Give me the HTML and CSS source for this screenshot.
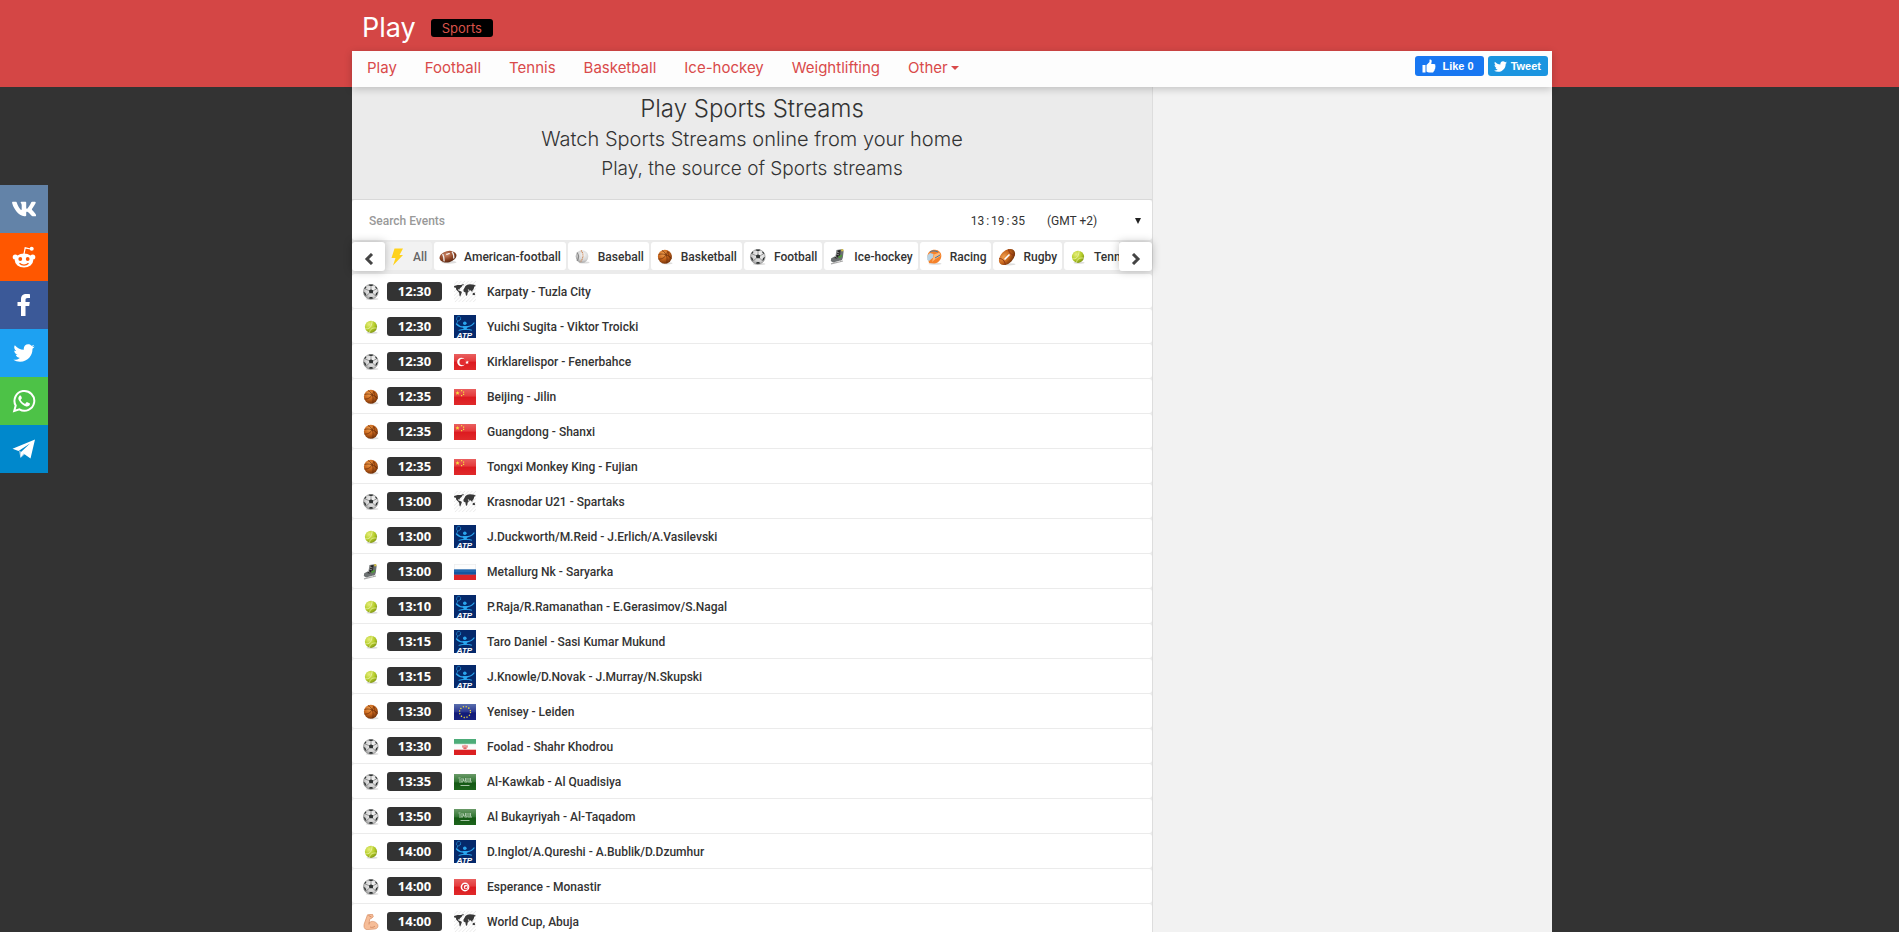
FILE: index.html
```html
<!DOCTYPE html>
<html lang="en">
<head>
<meta charset="utf-8">
<title>Play Sports Streams</title>
<link rel="stylesheet" href="styles.css">
</head>
<body>
<svg class="sprite" aria-hidden="true">
  <defs>
    <radialGradient id="g-orange" cx=".38" cy=".3" r=".75"><stop offset="0" stop-color="#f0a050"/><stop offset=".5" stop-color="#c8661c"/><stop offset="1" stop-color="#6e2f08"/></radialGradient>
    <radialGradient id="g-brown" cx=".45" cy=".3" r=".75"><stop offset="0" stop-color="#d08a6a"/><stop offset=".6" stop-color="#8a4020"/><stop offset="1" stop-color="#4e2412"/></radialGradient>
    <radialGradient id="g-lime" cx=".35" cy=".3" r=".75"><stop offset="0" stop-color="#e6ee7a"/><stop offset=".6" stop-color="#b4cc28"/><stop offset="1" stop-color="#7e9414"/></radialGradient>
    <radialGradient id="g-grey" cx=".6" cy=".35" r=".75"><stop offset="0" stop-color="#f6f6f6"/><stop offset=".6" stop-color="#d4d4d4"/><stop offset="1" stop-color="#8c8c8c"/></radialGradient>
    <linearGradient id="g-red" x2="0" y2="1"><stop offset="0" stop-color="#e9605f"/><stop offset=".45" stop-color="#e53a3c"/><stop offset=".5" stop-color="#dc1a20"/><stop offset="1" stop-color="#e02a2a"/></linearGradient>
    <linearGradient id="g-green" x2="0" y2="1"><stop offset="0" stop-color="#6a9a68"/><stop offset=".5" stop-color="#2f7430"/><stop offset=".55" stop-color="#145814"/><stop offset="1" stop-color="#1d651c"/></linearGradient>
    <linearGradient id="g-eu" x2="0" y2="1"><stop offset="0" stop-color="#5a6fae"/><stop offset=".5" stop-color="#2a3690"/><stop offset=".55" stop-color="#111a78"/><stop offset="1" stop-color="#18227e"/></linearGradient>
    <pattern id="hatch" width="4" height="4" patternUnits="userSpaceOnUse"><path d="M-1 5 5-1M-1 1 1-1M3 5 5 3" stroke="#ddd" stroke-width=".7"/></pattern>
  </defs>
  <symbol id="football" viewBox=".5 .5 15 15"><ellipse cx="9" cy="14.600" rx="6" ry="1" fill="#ddd"/><circle cx="7.800" cy="7.800" r="6.900" fill="url(#g-grey)" stroke="#777" stroke-width=".5"/><path d="M6 6.600 8 5.500l2.200 1.100-.5 2.500H6.500zM5.500 1.700 8 2.700 10.500 1.700 9.500 1h-3zM1 7.800l1.800 1.200L3.700 11.500l-1.500-.5zM14.600 7.800l-1.800 1.200-.9 2.500 1.500-.5zM6.300 14.300l.4-1.500h2.600l.4 1.500zM1.600 4.500l1.600-1.800.4 1.200-1.300 1.300zM14 4.500l-1.600-1.800-.4 1.200 1.300 1.300z" fill="#2f3333"/><path d="M8 5.500V2.700M10.200 6.600l3-1.400M6 6.600 2.500 5.200M9.700 9.100l2.200 2.400M6.500 9.100 3.700 11.500" stroke="#666" stroke-width=".6"/></symbol>
  <symbol id="tennis" viewBox="0 0 16 16"><ellipse cx="9" cy="13.800" rx="5.500" ry="1" fill="#ddd"/><circle cx="8" cy="7.800" r="6.100" fill="url(#g-lime)"/><path d="M2.400 9.500C6 10.600 8.500 8.500 9.200 2M6.500 13.600c.5-3.500 3-5.300 7.400-4.400" stroke="#eff5b4" stroke-width=".7" fill="none"/></symbol>
  <symbol id="basketball" viewBox="0 0 16 16"><ellipse cx="10" cy="14.300" rx="5.500" ry="1.100" fill="#ddd"/><circle cx="7.900" cy="7.700" r="7" fill="url(#g-orange)"/><path d="M1.500 5.500C6 4 11 6 14.500 9.500M5 1.500c4.500 2.500 6 7 4.500 12.800M1.300 10c4 .5 8-2 9.500-8M11.500 3c-1 3 .5 5 3 6" stroke="#6a2c08" stroke-width=".7" fill="none"/></symbol>
  <symbol id="hockey" viewBox="0 0 16 16"><path d="M6.500 1 13 0l.6 2.500-.8 6.300L12 11 3 13.500.8 12l.4-2.800L5.500 7z" fill="#6d7172"/><path d="M8 1.500 10.500 1 10 7 7 9.500 4 9l2-1.200z" fill="#222"/><path d="M11 .4 13 .1l.5 2-2 .5z" fill="#d8c244"/><path d="m6.500 3 3 1M6.300 5l3 1M5 7.300l2.500 1.300" stroke="#ccc" stroke-width=".6"/><path d="m8 7.600 4-2v2L9 9.500z" fill="#4f9a3a"/><path d="M1 14.800 13 12M4 13v1.500M10.500 11v2" stroke="#aaa" stroke-width="1.200" fill="none"/></symbol>
  <symbol id="arm" viewBox="0 0 16 16"><path d="M4.500.8 9.500.3l.8 2.500-2 1.700-1.500.3-.6 4C8.500 6.500 12.500 7 14.700 10.500c.8 2.500-.3 4.300-3 4.500L4 15.600C1 15.200.7 12.500 1.200 10z" fill="#f6bd98" stroke="#d98f66" stroke-width=".7"/><path d="M5.500 1.500 8.500 3M6.200 8.500 6 10.500M7 13c2 .8 4 .3 5-1" stroke="#c97c55" stroke-width=".7" fill="none"/></symbol>
  <symbol id="bolt" viewBox="0 0 18 18"><path d="M6.500.5H15L11.500 7H15L5 17.500 7.500 10H3.500z" fill="#ffd21c"/></symbol>
  <symbol id="amfoot" viewBox="0 0 18 16"><ellipse cx="10" cy="13.300" rx="7.500" ry="1.500" fill="#ddd"/><ellipse cx="9" cy="7.700" rx="8.600" ry="5.600" transform="rotate(-14 9 7.700)" fill="url(#g-brown)"/><path d="M3.600 5c1.200 2.200 1.600 4.400 1.400 7.400M13 2.700c1.500 2.200 2 4.200 1.700 6.800" stroke="#eee" stroke-width="1.300" fill="none"/><path d="m7 5.500 4-1.200M8 4.500l.4 1.500M9.500 4l.4 1.500" stroke="#fff" stroke-width=".7"/></symbol>
  <symbol id="baseball" viewBox="-1 -1 18 18"><ellipse cx="10" cy="13.500" rx="5.500" ry="1" fill="#ddd"/><circle cx="8" cy="7.500" r="6.300" fill="url(#g-grey)"/><path d="M7 1.500c3 3 2.500 8-.8 11.700" stroke="#cf8a5a" stroke-width="1.100" stroke-dasharray="1.200 .6" fill="none"/><path d="M3 3.500c2 2.500 2 5.500 0 8.500" stroke="#888" stroke-width="1.200" fill="none"/></symbol>
  <symbol id="racing" viewBox="0 0 16 16"><ellipse cx="9" cy="14.800" rx="6.500" ry="1" fill="#ddd"/><path d="M1.500 8C1.300 3 5 .5 9 .7c4 .3 6.500 3 6.300 6.500-.3 4-3 6.500-7 7.300L3 14z" fill="#f5822a"/><path d="M1.200 6.500 4 4l3.500 1-.3 3.500L3 12 1.200 11z" fill="#b9d3e4"/><path d="m8 5.500 5.500-2 1 3.500-5 3L6 13" fill="#ffb877"/><path d="M4 3C6 1.500 9 1.500 12 3M9 9l5-3" stroke="#3d78a8" stroke-width="1" fill="none"/></symbol>
  <symbol id="rugby" viewBox="0 0 18 18"><ellipse cx="11" cy="16.300" rx="6.500" ry="1.100" fill="#ddd"/><ellipse cx="9" cy="9" rx="9.600" ry="6.200" transform="rotate(-45 9 9)" fill="url(#g-orange)"/><path d="M1.300 10.500c3 0 5.500 2.500 6 6M10.500 1.500c.5 3 3 5.500 6 6" stroke="#8a3418" stroke-width="1" fill="none"/><path d="m6.500 11.500 5-5" stroke="#fff" stroke-width="1.600"/></symbol>

  <symbol id="world" viewBox="0 0 24 23"><path d="M0 0h24v23H0z" fill="url(#hatch)"/><path d="m0 5.500 4-1 5-.3-.5 2L6.500 8 5.800 9.500 4.500 8.800l.3 1.500 2 .7 1.800 1-.8 2.500-1 2.500-.7-.5-.4-3.500L4.500 11.500 2.500 9.500 2 7.500.3 7zM8 3.800l3-.3L9.800 5.300zM11.500 7.500l1-2 2-1.300 3-.7L22 4l2 1.500-1.800.5-.5 2-1 2-1 .7.5 1.500-1.200-.9-.9-1.500-.8 1.500-.9-1.800-1.500-.4 1.300 2-1.400 1.800-.3 2.500-1 1-.8-2-.3-2-1.800-.5-.4-2zM20.500 13.500l1.700-.8 1 2-1 1-2-.6z" fill="#383838"/></symbol>
  <symbol id="atp" viewBox="0 0 22 23"><path d="M0 0h22v23H0z" fill="#05296b"/><g fill="none" stroke="#2aa5ee" stroke-linecap="round"><ellipse cx="4.600" cy="3.600" rx="2" ry="2.500" transform="rotate(20 4.600 3.600)" stroke-width=".5"/><path d="M3.700 6 2.800 8.500" stroke-width=".6"/><path d="M2.500 9c2.500 2.700 5.500 3.300 8.500 3 4-.2 7-1 9-4" stroke-width="1.300"/><path d="M11.500 12.500v2M5 15.300c4-1.300 9-1.300 12.500-.2" stroke-width="1"/></g><circle cx="10.800" cy="8.300" r="1.800" fill="#2aa5ee"/><path d="m8.500 11 5.500.3-2 3.700H10z" fill="#2aa5ee"/><text x="10.500" y="22.500" text-anchor="middle" class="atp-label">ATP</text></symbol>
  <symbol id="tr" viewBox="0 0 22 16"><path d="M0 0h22v16H0z" fill="url(#g-red)"/><circle cx="7.400" cy="8" r="4.200" fill="#fff"/><circle cx="8.700" cy="8" r="3.300" fill="#e22c30"/><path d="m11.200 8 1.300-.3.500-1.300.6 1.200 1.400.1-1 .9.300 1.300-1.200-.7-1.200.7.300-1.300z" fill="#fff"/></symbol>
  <symbol id="cn" viewBox="0 0 22 16"><path d="M0 0h22v16H0z" fill="url(#g-red)"/><path d="m3.500 2 .6 1.300 1.400.1-1 1 .3 1.400-1.300-.7-1.300.7.300-1.400-1-1 1.400-.1zM7 1h1.200v1.200H7zM9 2.500h1.200v1.200H9zM9 4.700h1.200v1.200H9zM7 6h1.200v1.200H7z" fill="#f8d83c"/></symbol>
  <symbol id="ru" viewBox="0 0 22 16"><path d="M0 0h22v5.300H0z" fill="#fdfdfd"/><path d="M0 5.300h22v5.400H0z" fill="#2266ad"/><path d="M0 8h22v2.700H0z" fill="#1557a0"/><path d="M0 10.700h22V16H0z" fill="#dc2428"/><path d="M.25 5V.25h21.500V5" fill="none" stroke="#ddd" stroke-width=".5"/></symbol>
  <symbol id="eu" viewBox="0 0 22 16"><path d="M0 0h22v16H0z" fill="url(#g-eu)"/><circle cx="11" cy="8" r="5.500" fill="none" stroke="#f2dc3a" stroke-width="1.300" stroke-dasharray="1.200 1.680"/></symbol>
  <symbol id="ir" viewBox="0 0 22 16"><path d="M0 0h22v5.300H0z" fill="#4dac79"/><path d="M0 5.300h22v5.400H0z" fill="#fcfcfc"/><path d="M0 10.700h22V16H0z" fill="#dc2022"/><path d="M.5 4.600h21" stroke="#a5d6ba" stroke-dasharray="1 1" stroke-width=".8"/><path d="M9 6.200c-.8 2 0 3.400 2 3.600 2-.2 2.800-1.600 2-3.600M11 5.800v4M10 6.500c-.6 1.200 0 2.400 1 3 1-.6 1.600-1.800 1-3" stroke="#e04a4a" stroke-width=".8" fill="none"/></symbol>
  <symbol id="sa" viewBox="0 0 22 16"><path d="M0 0h22v16H0z" fill="url(#g-green)"/><path d="M4.500 4h2M5 6h2M5 8h4M8 4v4M9.500 4.500v2.500h2V4M10.500 8h3M13 4v4M15 4v3.500M16.500 4v3.500M14 8h4" stroke="#c5d8c4" stroke-width=".8" fill="none"/><path d="M6.500 11.500h9" stroke="#c8dcc8" stroke-width=".8"/></symbol>
  <symbol id="tn" viewBox="0 0 22 16"><path d="M0 0h22v16H0z" fill="url(#g-red)"/><circle cx="11" cy="8" r="4.400" fill="#fff"/><circle cx="11.200" cy="8" r="3" fill="#dc2026"/><circle cx="12" cy="8" r="2.300" fill="#fff"/><path d="m10.500 8 1.200-.3.400-1.200.5 1.100 1.300.1-.9.800.2 1.200-1.100-.7-1 .7.200-1.200z" fill="#dc2026"/></symbol>

  <symbol id="bird" viewBox="0 40 512 432"><path d="M459.370 151.716c.325 4.548.325 9.097.325 13.645 0 138.720-105.583 298.558-298.558 298.558-59.452 0-114.680-17.219-161.137-47.106 8.447.974 16.568 1.299 25.340 1.299 49.055 0 94.213-16.568 130.274-44.832-46.132-.975-84.792-31.188-98.112-72.772 6.498.974 12.995 1.624 19.818 1.624 9.421 0 18.843-1.300 27.614-3.573-48.081-9.747-84.143-51.980-84.143-102.985v-1.299c13.969 7.797 30.214 12.670 47.431 13.319-28.264-18.843-46.781-51.005-46.781-87.391 0-19.492 5.197-37.360 14.294-52.954 51.655 63.675 129.300 105.258 216.365 109.807-1.624-7.797-2.599-15.918-2.599-24.040 0-57.828 46.782-104.934 104.934-104.934 30.213 0 57.502 12.670 76.670 33.137 23.715-4.548 46.456-13.320 66.599-25.340-7.798 24.366-24.366 44.833-46.132 57.827 21.117-2.273 41.584-8.122 60.426-16.243-14.292 20.791-32.161 39.308-52.628 54.253z" fill="#fff"/></symbol>
</svg>

<nav class="share" aria-label="Share">
  <a class="share-link vk" href="#" aria-label="VK"><svg width="24" height="16" viewBox="16 90 536 332"><path fill="#fff" d="M545 117.700c3.700-12.500 0-21.700-17.800-21.700h-58.900c-15 0-21.900 7.900-25.600 16.700 0 0-30 73.100-72.400 120.500-13.700 13.700-20 18.100-27.500 18.100-3.700 0-9.400-4.400-9.400-16.900V117.700c0-15-4.200-21.700-16.600-21.700h-92.600c-9.400 0-15 7-15 13.500 0 14.200 21.200 17.500 23.400 57.500v86.800c0 19-3.400 22.500-10.900 22.500-20 0-68.600-73.400-97.400-157.400-5.800-16.300-11.500-22.900-26.600-22.900H38.800c-16.800 0-20.200 7.900-20.200 16.700 0 15.600 20 93.100 93.100 195.500C160.400 378.100 229 416 291.400 416c37.500 0 42.100-8.400 42.100-22.900 0-66.800-3.400-73.100 15.400-73.100 8.700 0 23.700 4.400 58.700 38.100 40 40 46.600 57.900 69 57.900h58.900c16.800 0 25.300-8.400 20.400-25-11.200-34.900-86.900-106.700-90.300-111.500-8.700-11.200-6.200-16.200 0-26.200.1-.1 72-101.300 79.400-135.600z"/></svg></a>
  <a class="share-link reddit" href="#" aria-label="Reddit"><svg width="24" height="24" viewBox="0 0 24 24"><g fill="#fff"><ellipse cx="12" cy="15.500" rx="9.200" ry="7"/><circle cx="3.300" cy="12" r="2.600"/><circle cx="20.700" cy="12" r="2.600"/><circle cx="19.700" cy="3.700" r="2"/></g><path d="M12 9 13.200 2.800 18.500 4" fill="none" stroke="#fff" stroke-width="1.200"/><circle cx="8.300" cy="14" r="1.900" fill="#ff5700"/><circle cx="15.700" cy="14" r="1.900" fill="#ff5700"/><path d="M7.500 18.300c2.500 2.300 6.500 2.300 9 0" fill="none" stroke="#ff5700" stroke-width="1.300"/></svg></a>
  <a class="share-link facebook" href="#" aria-label="Facebook"><svg width="14" height="22" viewBox="0 0 14 22"><path fill="#fff" d="M4 22V12H.500V8H4V5.200C4 1.700 6 0 9.300 0c1.700 0 2.900.1 3.700.2v3.700h-2.300C8.900 3.900 8.500 4.700 8.500 6v2h4.300l-.6 4H8.500v10z"/></svg></a>
  <a class="share-link twitter" href="#" aria-label="Twitter"><svg width="22" height="18"><use href="#bird"/></svg></a>
  <a class="share-link whatsapp" href="#" aria-label="WhatsApp"><svg width="24" height="24" viewBox="0 0 24 24"><path d="M2.200 22 3.700 16.600A9.900 9.900 0 1 1 7.400 20.400z" fill="none" stroke="#fff" stroke-width="2"/><path fill="#fff" d="M8.500 6.500c-.4-.1-.9 0-1.200.4-1.400 1.500-1.200 3.300 0 5.200 1.900 3 4.300 4.700 7 5.300 1.700.3 3.300-.6 3.600-2.100.1-.6 0-.9-.3-1l-2.300-1.100c-.4-.2-.7 0-.9.200l-.9 1.200c-.2.200-.5.200-.8.100-1.800-.8-3-1.900-3.900-3.500-.1-.3-.1-.5.100-.7l.8-1c.1-.2.2-.4.100-.7L9.100 7c-.1-.3-.3-.5-.6-.5z"/></svg></a>
  <a class="share-link telegram" href="#" aria-label="Telegram"><svg width="24" height="20" viewBox="0 0 24 20"><path d="M7 11.500 8.500 19l4.500-4z" fill="#a9d0ea"/><path d="M.500 9.700 23 .500 18.500 19.500 11.500 14.500 8.500 18.500 9 13 18 4.500 6.500 12z" fill="#fff"/></svg></a>
</nav>

<header class="top">
  <div class="wrap">
    <div class="brand-row"><a class="brand" href="#">Play</a><a class="tag" href="#">Sports</a></div>
    <nav class="menu">
      <a href="#">Play</a><a href="#">Football</a><a href="#">Tennis</a><a href="#">Basketball</a><a href="#">Ice-hockey</a><a href="#">Weightlifting</a><a class="more" href="#">Other</a>
      <div class="social">
        <button class="like" type="button"><svg width="14" height="14" viewBox="0 0 14 14"><path d="M.500 6h3v7.500h-3zM4.500 6 7.500 3V.800C8.500 0 9.800.8 9.700 2.200L9.200 5H12c1.200 0 1.700.9 1.200 1.900.5.600.4 1.300-.1 1.800.3.700.1 1.300-.5 1.700.2.700-.1 1.300-.8 1.600.1.900-.4 1.500-1.400 1.500H7c-1 0-1.700-.3-2.500-1z" fill="#fff"/></svg>Like 0</button>
        <button class="tweet" type="button"><svg width="13" height="11"><use href="#bird"/></svg>Tweet</button>
      </div>
    </nav>
  </div>
</header>

<div class="wrap page">
  <main class="main">
    <section class="hero">
      <h1>Play Sports Streams</h1>
      <h2>Watch Sports Streams online from your home</h2>
      <h3>Play, the source of Sports streams</h3>
    </section>
    <div class="filter">
      <input class="search" type="text" placeholder="Search Events" aria-label="Search Events">
      <div class="clock"><span>13</span><span>:</span><span>19</span><span>:</span><span>35</span></div>
      <div class="zone"><select aria-label="Time zone"><option>(GMT +2)</option></select></div>
    </div>
    <div class="sports">
      <button class="arrow" type="button" aria-label="Previous"><svg width="10" height="12" viewBox="0 0 10 12"><path d="M8 1 3 6l5 5" fill="none" stroke="#444" stroke-width="3"/></svg></button>
      <div class="tabs">
        <button class="tab active" type="button"><svg><use href="#bolt"/></svg>All</button>
        <button class="tab" type="button"><svg><use href="#amfoot"/></svg>American-football</button>
        <button class="tab" type="button"><svg><use href="#baseball"/></svg>Baseball</button>
        <button class="tab" type="button"><svg class="ball"><use href="#basketball"/></svg>Basketball</button>
        <button class="tab" type="button"><svg class="ball"><use href="#football"/></svg>Football</button>
        <button class="tab" type="button"><svg class="ball"><use href="#hockey"/></svg>Ice-hockey</button>
        <button class="tab" type="button"><svg class="ball"><use href="#racing"/></svg>Racing</button>
        <button class="tab" type="button"><svg><use href="#rugby"/></svg>Rugby</button>
        <button class="tab" type="button"><svg class="ball"><use href="#tennis"/></svg>Tennis</button>
      </div>
      <button class="arrow" type="button" aria-label="Next"><svg width="10" height="12" viewBox="0 0 10 12"><path d="m2 1 5 5-5 5" fill="none" stroke="#444" stroke-width="3"/></svg></button>
    </div>
    <div class="events">
      <a class="event" href="#"><svg class="sport"><use href="#football"/></svg><time>12:30</time><svg class="flag square"><use href="#world"/></svg><span>Karpaty - Tuzla City</span></a>
      <a class="event" href="#"><svg class="sport"><use href="#tennis"/></svg><time>12:30</time><svg class="flag square"><use href="#atp"/></svg><span>Yuichi Sugita - Viktor Troicki</span></a>
      <a class="event" href="#"><svg class="sport"><use href="#football"/></svg><time>12:30</time><svg class="flag"><use href="#tr"/></svg><span>Kirklarelispor - Fenerbahce</span></a>
      <a class="event" href="#"><svg class="sport"><use href="#basketball"/></svg><time>12:35</time><svg class="flag"><use href="#cn"/></svg><span>Beijing - Jilin</span></a>
      <a class="event" href="#"><svg class="sport"><use href="#basketball"/></svg><time>12:35</time><svg class="flag"><use href="#cn"/></svg><span>Guangdong - Shanxi</span></a>
      <a class="event" href="#"><svg class="sport"><use href="#basketball"/></svg><time>12:35</time><svg class="flag"><use href="#cn"/></svg><span>Tongxi Monkey King - Fujian</span></a>
      <a class="event" href="#"><svg class="sport"><use href="#football"/></svg><time>13:00</time><svg class="flag square"><use href="#world"/></svg><span>Krasnodar U21 - Spartaks</span></a>
      <a class="event" href="#"><svg class="sport"><use href="#tennis"/></svg><time>13:00</time><svg class="flag square"><use href="#atp"/></svg><span>J.Duckworth/M.Reid - J.Erlich/A.Vasilevski</span></a>
      <a class="event" href="#"><svg class="sport"><use href="#hockey"/></svg><time>13:00</time><svg class="flag"><use href="#ru"/></svg><span>Metallurg Nk - Saryarka</span></a>
      <a class="event" href="#"><svg class="sport"><use href="#tennis"/></svg><time>13:10</time><svg class="flag square"><use href="#atp"/></svg><span>P.Raja/R.Ramanathan - E.Gerasimov/S.Nagal</span></a>
      <a class="event" href="#"><svg class="sport"><use href="#tennis"/></svg><time>13:15</time><svg class="flag square"><use href="#atp"/></svg><span>Taro Daniel - Sasi Kumar Mukund</span></a>
      <a class="event" href="#"><svg class="sport"><use href="#tennis"/></svg><time>13:15</time><svg class="flag square"><use href="#atp"/></svg><span>J.Knowle/D.Novak - J.Murray/N.Skupski</span></a>
      <a class="event" href="#"><svg class="sport"><use href="#basketball"/></svg><time>13:30</time><svg class="flag"><use href="#eu"/></svg><span>Yenisey - Leiden</span></a>
      <a class="event" href="#"><svg class="sport"><use href="#football"/></svg><time>13:30</time><svg class="flag"><use href="#ir"/></svg><span>Foolad - Shahr Khodrou</span></a>
      <a class="event" href="#"><svg class="sport"><use href="#football"/></svg><time>13:35</time><svg class="flag"><use href="#sa"/></svg><span>Al-Kawkab - Al Quadisiya</span></a>
      <a class="event" href="#"><svg class="sport"><use href="#football"/></svg><time>13:50</time><svg class="flag"><use href="#sa"/></svg><span>Al Bukayriyah - Al-Taqadom</span></a>
      <a class="event" href="#"><svg class="sport"><use href="#tennis"/></svg><time>14:00</time><svg class="flag square"><use href="#atp"/></svg><span>D.Inglot/A.Qureshi - A.Bublik/D.Dzumhur</span></a>
      <a class="event" href="#"><svg class="sport"><use href="#football"/></svg><time>14:00</time><svg class="flag"><use href="#tn"/></svg><span>Esperance - Monastir</span></a>
      <a class="event" href="#"><svg class="sport"><use href="#arm"/></svg><time>14:00</time><svg class="flag square"><use href="#world"/></svg><span>World Cup, Abuja</span></a>
    </div>
  </main>
  <aside class="side"></aside>
</div>
</body>
</html>
```
FILE: styles.css
```css
* { box-sizing: border-box; }

body {
  margin: 0;
  padding-left: 5px;
  background: #333;
  color: #333;
  font-family: Roboto, "Open Sans", sans-serif;
  font-size: 12px;
}

a { color: inherit; text-decoration: none; }
button, input, select { font: inherit; color: inherit; border: 0; margin: 0; }
.sprite { position: absolute; width: 0; height: 0; }

.wrap { max-width: 1200px; margin: 0 auto; }

/* Header */
.top {
  position: relative;
  z-index: 2;
  margin-left: -5px;
  padding-left: 5px;
  background: #d44645;
  font-family: Inter, "Open Sans", sans-serif;
}
.brand-row { display: flex; align-items: center; gap: 15px; height: 51px; padding: 4px 10px 0; }
.brand { color: #fff; font-size: 27px; line-height: 30px; }
.tag {
  padding: 0 11px;
  border-radius: 3px;
  background: #000;
  color: #d9534a;
  font-size: 13px;
  line-height: 18px;
}
.menu {
  display: flex;
  align-items: center;
  gap: 28px;
  height: 36px;
  padding: 0 4px 4px 15px;
  background: #fdfdfd;
  color: #d94a4a;
  font-size: 15px;
  box-shadow: 0 2px 8px rgba(0, 0, 0, .2);
}
.more::after {
  content: "";
  display: inline-block;
  margin-left: 3px;
  vertical-align: 3px;
  border: 4px solid transparent;
  border-top-color: currentColor;
  border-bottom: 0;
}
.social { display: flex; gap: 4px; margin-left: auto; padding-bottom: 2px; }
.social button {
  display: flex;
  align-items: center;
  height: 20px;
  border-radius: 3px;
  color: #fff;
  font: bold 11px "Liberation Sans", sans-serif;
}
.like { gap: 6px; padding: 0 10px 0 7px; background: #1877f2; }
.tweet { gap: 4px; padding: 0 7px 0 6px; background: #1b95e0; }

/* Share bar */
.share { position: fixed; top: 185px; left: 0; z-index: 3; }
.share-link { display: flex; align-items: center; justify-content: center; width: 48px; height: 48px; }
.vk { background: #6383a8; }
.reddit { background: #ff5700; }
.facebook { background: #3b5998; }
.twitter { background: #1da1f2; }
.whatsapp { background: #4dc247; }
.telegram { background: #0088cc; }

/* Page */
.page { display: grid; grid-template-columns: 2fr 1fr; min-height: calc(100vh - 87px); }
.main { min-width: 0; background: #ebebeb; }
.side { background: #f2f2f2; border-left: 1px solid #ddd; }

.hero {
  height: 113px;
  padding-top: 6px;
  border-bottom: 1px solid #d9d9d9;
  text-align: center;
  font-family: Inter, "Open Sans", sans-serif;
}
.hero h1, .hero h2, .hero h3 { margin: 0; font-weight: 300; line-height: 29px; }
.hero h1 { font-size: 24px; line-height: 32px; }
.hero h2 { font-size: 20px; }
.hero h3 { font-size: 19px; }

.filter { display: flex; align-items: center; height: 40px; padding-top: 1px; border-radius: 3px; background: #fff; }
.search { flex: 1; height: 39px; padding: 0 17px; background: none; outline: 0; font-weight: 500; }
.search::placeholder { color: #999; opacity: 1; }
.clock { display: flex; gap: 2px; }
.zone { position: relative; width: 127px; padding-left: 18px; }
.zone select { width: 100%; padding: 0 4px; appearance: none; background: none; }
.zone::after {
  content: "";
  position: absolute;
  top: 4px;
  right: 11px;
  border: 3px solid transparent;
  border-top: 6px solid #222;
  border-bottom: 0;
}

.sports { display: flex; margin: 2px 0 3px; height: 29px; }
.arrow {
  position: relative;
  z-index: 1;
  display: flex;
  flex: none;
  align-items: center;
  justify-content: center;
  width: 33px;
  padding: 4px 0 0;
  border-radius: 3px;
  background: #fff;
  box-shadow: 0 0 8px rgba(0, 0, 0, .25);
}
.tabs { display: flex; flex: 1; gap: 2px; height: 28px; overflow: hidden; }
.tab {
  display: flex;
  flex: none;
  align-items: center;
  gap: 7px;
  padding: 1px 5px 0;
  border-radius: 3px;
  background: #fff;
  white-space: nowrap;
  font-weight: 500;
}
.tab svg { width: 18px; height: 18px; }
.tab .ball { height: 16px; }
.tab.active { padding-left: 3px; background: #f2f2f2; color: #666; }

/* Events */
.event {
  display: flex;
  align-items: center;
  height: 34px;
  margin-bottom: 1px;
  padding: 1px 0 0 11px;
  border-radius: 3px;
  background: #fff;
  font-weight: 500;
}
.sport { width: 16px; height: 16px; margin-right: 8px; }
time {
  width: 55px;
  margin-right: 12px;
  border-radius: 3px;
  background: #333;
  color: #fff;
  text-align: center;
  font: bold 13px/19px "Open Sans", sans-serif;
}
.flag { width: 22px; height: 16px; margin-right: 11px; }
.flag.square { height: 23px; }
.atp-label { font: italic bold 8px "Liberation Sans", sans-serif; fill: #fff; }
```
